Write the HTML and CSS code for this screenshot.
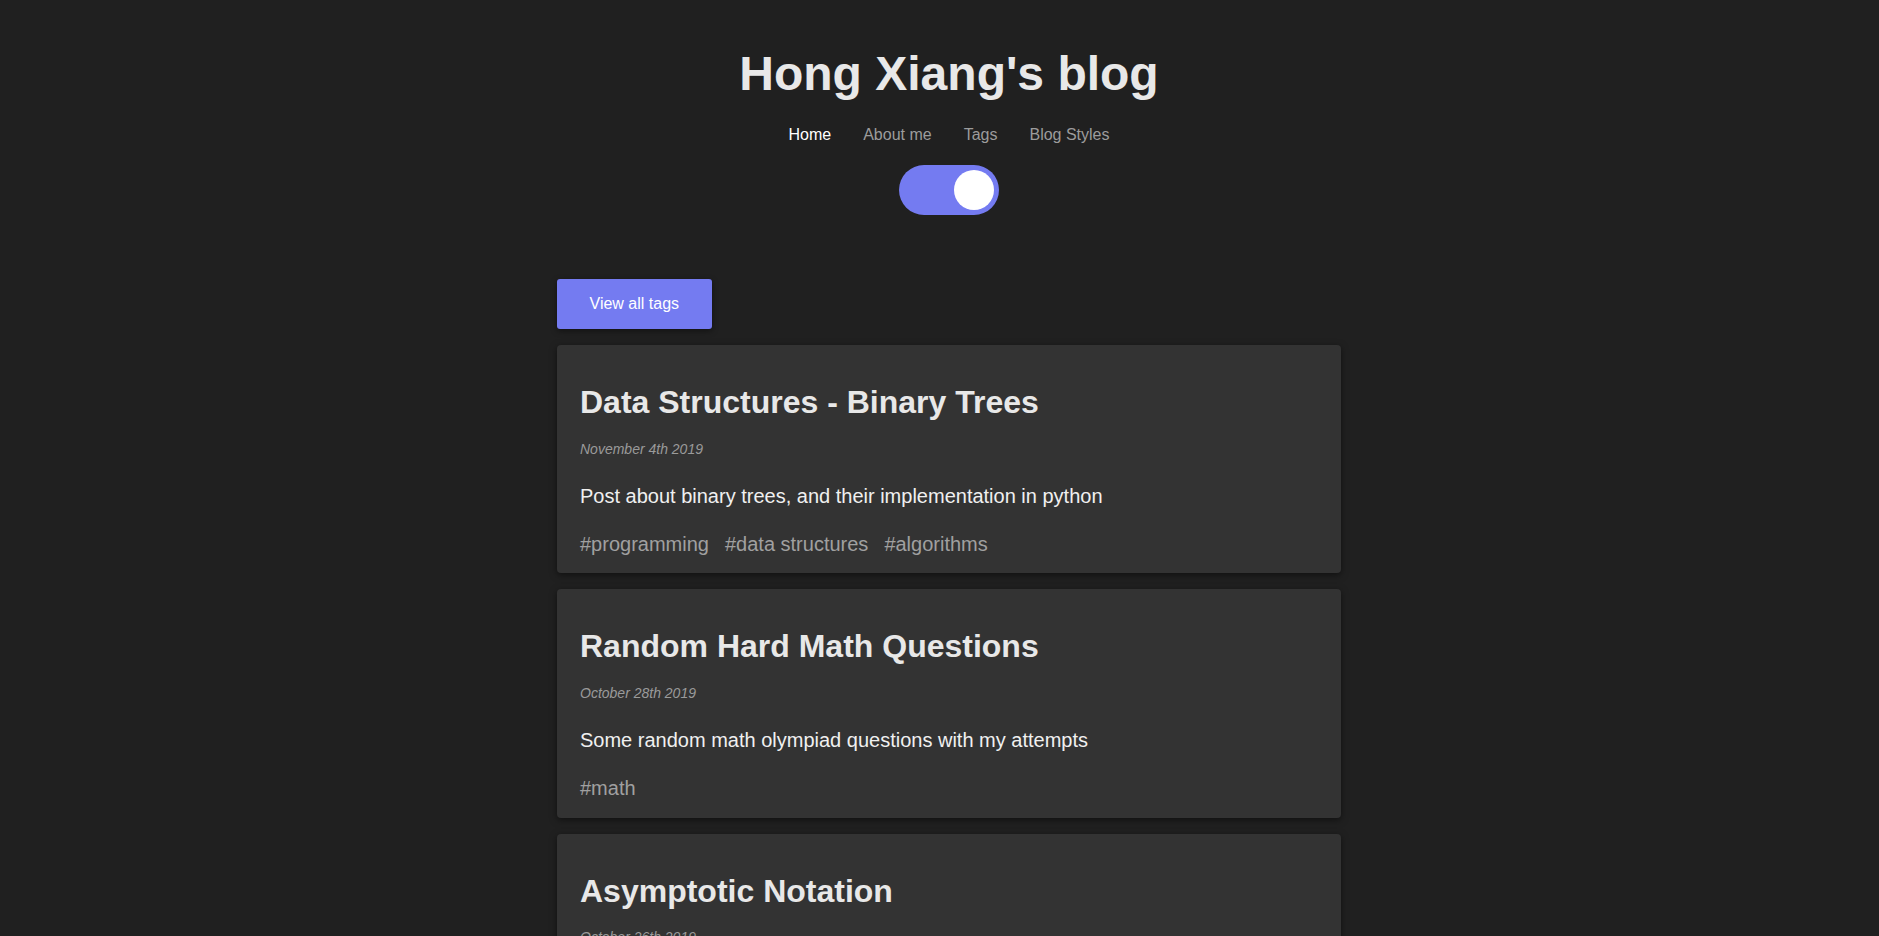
FILE: index.html
```html
<!DOCTYPE html>
<html lang="en">
<head>
<meta charset="utf-8">
<title>Hong Xiang's blog</title>
<link rel="stylesheet" href="styles.css">
</head>
<body>
<header class="header">
  <h1 class="site-title">Hong Xiang's blog</h1>
  <nav class="nav">
    <a class="nav-link active" href="#">Home</a>
    <a class="nav-link" href="#">About me</a>
    <a class="nav-link" href="#">Tags</a>
    <a class="nav-link" href="#">Blog Styles</a>
  </nav>
  <div class="toggle"><span class="knob"></span></div>
</header>
<main class="main">
  <a class="btn" href="#">View all tags</a>
  <div class="posts">
    <article class="card">
      <h2 class="card-title">Data Structures - Binary Trees</h2>
      <div class="date">November 4th 2019</div>
      <p class="desc">Post about binary trees, and their implementation in python</p>
      <div class="tags"><span class="tag">#programming</span><span class="tag">#data structures</span><span class="tag">#algorithms</span></div>
    </article>
    <article class="card">
      <h2 class="card-title">Random Hard Math Questions</h2>
      <div class="date">October 28th 2019</div>
      <p class="desc">Some random math olympiad questions with my attempts</p>
      <div class="tags"><span class="tag">#math</span></div>
    </article>
    <article class="card">
      <h2 class="card-title">Asymptotic Notation</h2>
      <div class="date">October 26th 2019</div>
      <p class="desc">Notes on Big O, Big Omega and Big Theta notation</p>
      <div class="tags"><span class="tag">#programming</span><span class="tag">#algorithms</span></div>
    </article>
  </div>
</main>
</body>
</html>
```
FILE: styles.css
```css
html, body {
  background: #202020;
}
body {
  margin: 0;
  padding: 0 0 40px 19px;
  font-family: "Liberation Sans", Arial, sans-serif;
  color: #e8e8e8;
}
.header {
  display: flex;
  flex-direction: column;
  align-items: center;
  padding-top: 46px;
}
.site-title {
  margin: 0;
  font-size: 48px;
  line-height: 56px;
  font-weight: 700;
  color: #e8e8e8;
}
.nav {
  margin-top: 22.5px;
  display: flex;
  gap: 32px;
  font-size: 16px;
  line-height: 20px;
}
.nav-link {
  color: #9c9c9c;
  text-decoration: none;
}
.nav-link.active {
  color: #ffffff;
}
.toggle {
  margin-top: 20.5px;
  width: 100px;
  height: 50px;
  box-sizing: border-box;
  border-radius: 25px;
  background: #747bf1;
  display: flex;
  align-items: center;
  justify-content: flex-end;
  padding: 0 5px;
}
.knob {
  width: 40px;
  height: 40px;
  border-radius: 50%;
  background: #ffffff;
}
.main {
  width: 784px;
  margin: 64px auto 0;
}
.btn {
  display: inline-flex;
  align-items: center;
  height: 50px;
  padding: 0 32.5px;
  background: #747bf1;
  color: #ffffff;
  font-size: 16px;
  text-decoration: none;
  border-radius: 3px;
  box-shadow: 0 2px 6px rgba(0, 0, 0, 0.45);
}
.posts {
  margin-top: 16px;
  display: flex;
  flex-direction: column;
  gap: 16px;
}
.card {
  background: #333333;
  border-radius: 4px;
  padding: 24px 24px 17.4px 23px;
  box-shadow: 0 2px 7px rgba(0, 0, 0, 0.5);
}
.card-title {
  margin: 13px 0 0;
  font-size: 32px;
  line-height: 40px;
  font-weight: 700;
  color: #e8e8e8;
}
.date {
  margin-top: 18.6px;
  font-size: 14px;
  line-height: 16px;
  font-style: italic;
  color: #9a9a9a;
}
.desc {
  margin: 27.4px 0 0;
  font-size: 20px;
  line-height: 24px;
  color: #f0f0f0;
}
.tags {
  margin-top: 24px;
  display: flex;
  gap: 16px;
  font-size: 20px;
  line-height: 24px;
}
.tag {
  color: #a0a0a0;
}
```
